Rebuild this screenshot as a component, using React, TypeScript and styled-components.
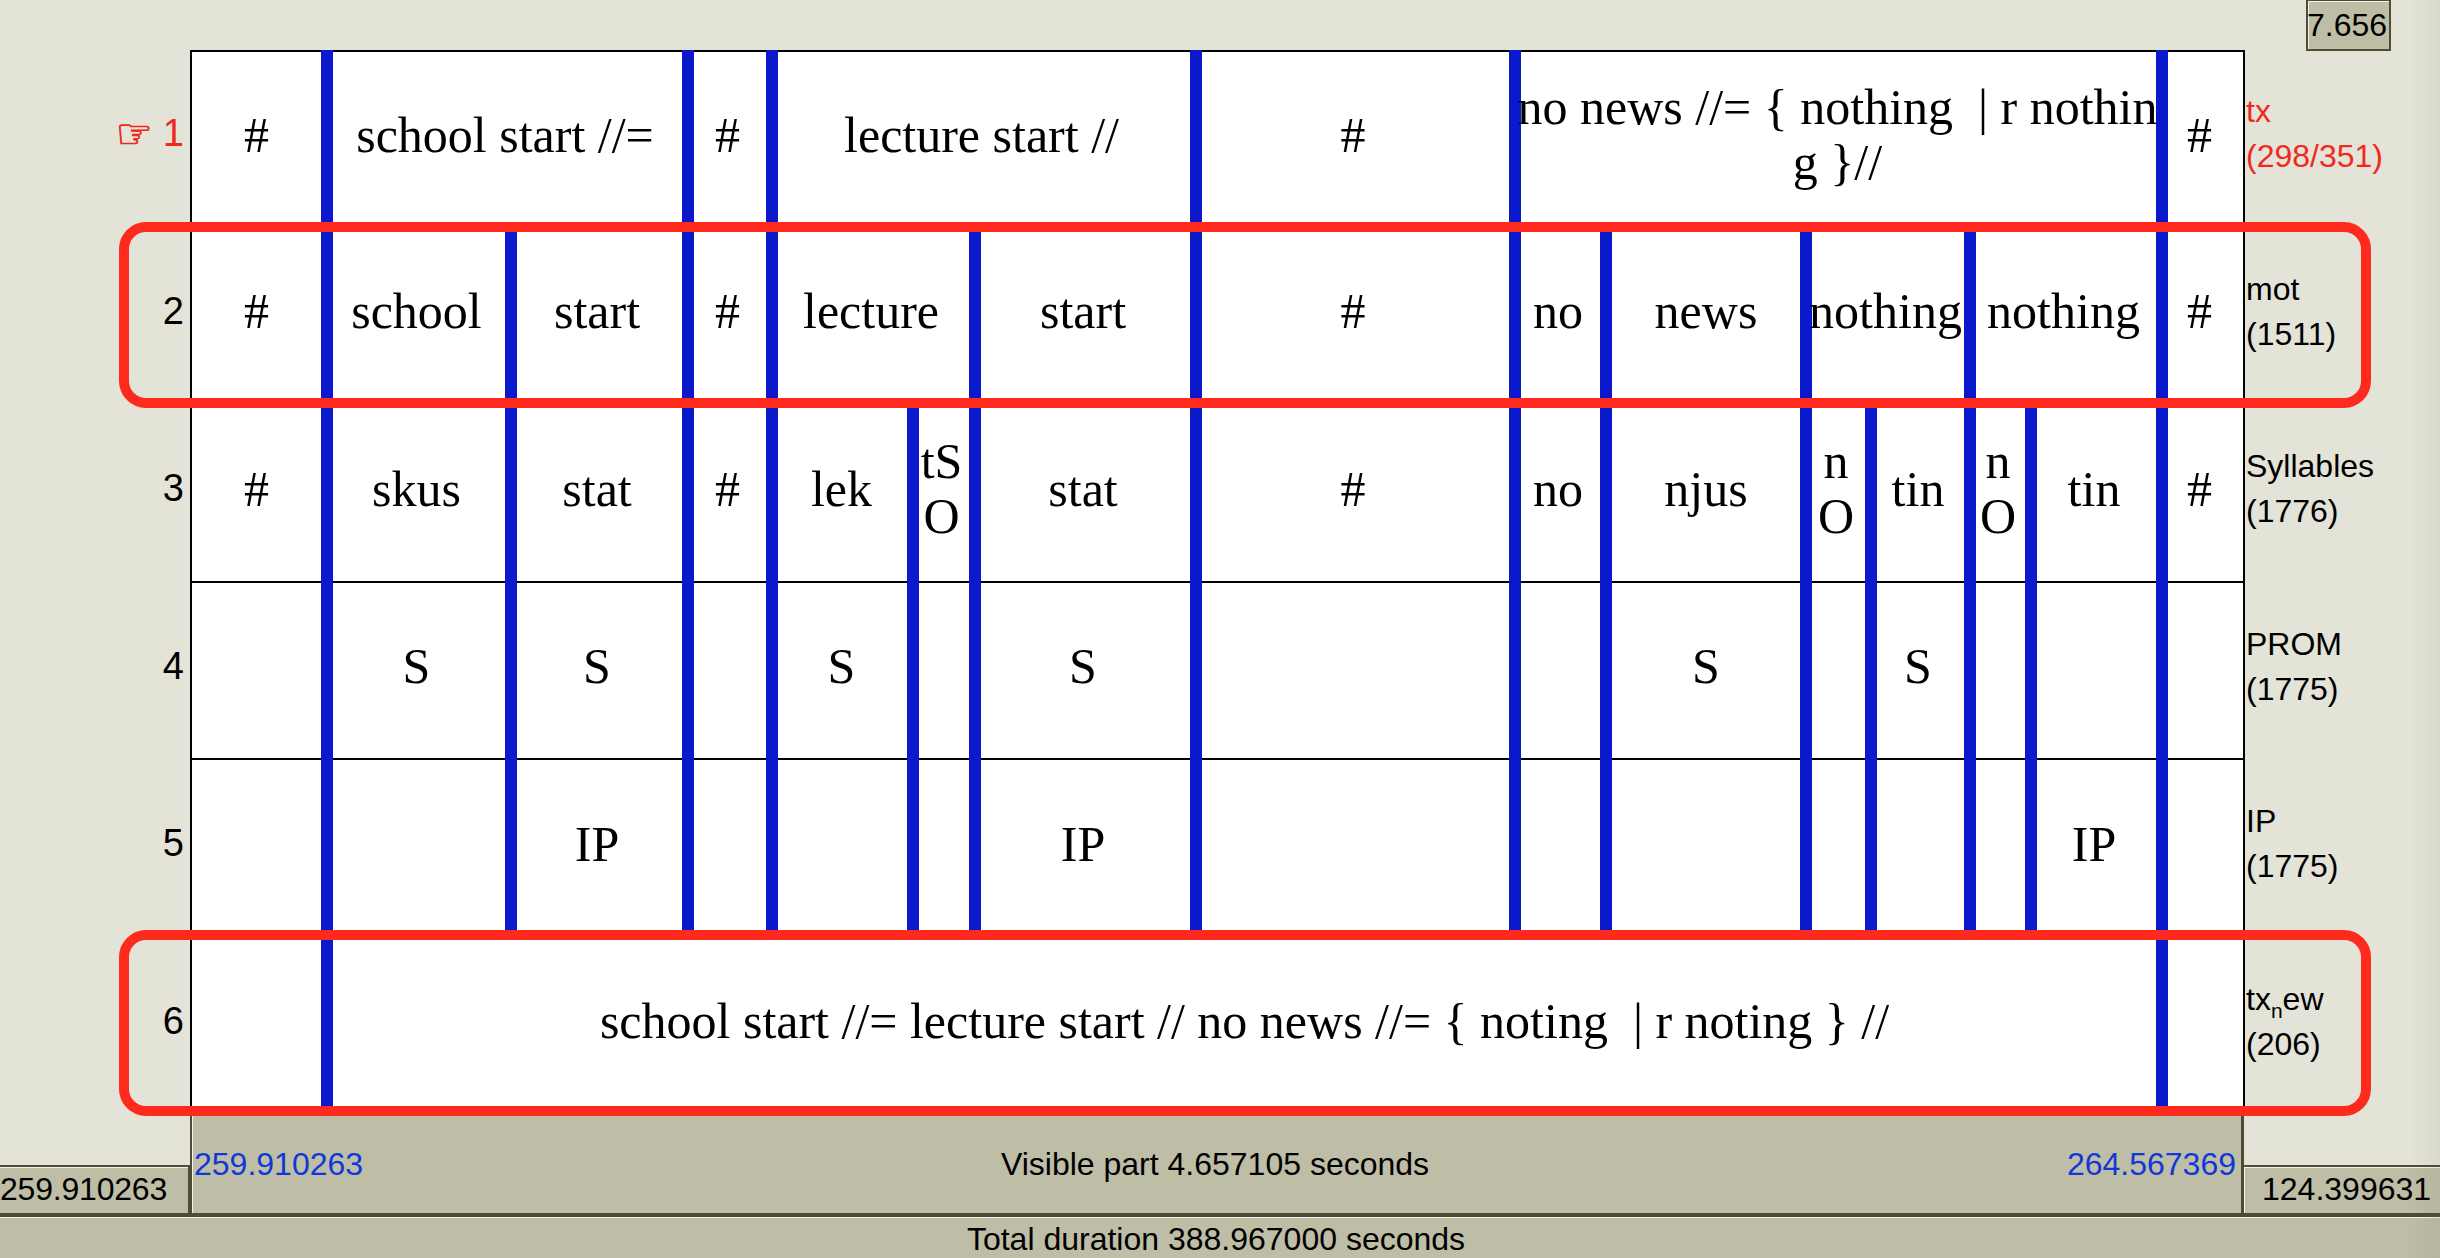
import React from "react";
import styled, { createGlobalStyle } from "styled-components";

const SANS = `"Liberation Sans", Arial, sans-serif`;
const SERIF = `"Liberation Serif", "Times New Roman", serif`;

const BG = "#e3e3d8";
const BAR = "#bebda5";
const DARK = "#4d4d35";
const LIGHT = "#f4f4e8";
const RED = "#f0291f";
const BLUE = "#0a19cc";

// left edge of the drawing area inside the panel border
const PANEL_START = 192;

const Sub = styled.span`
  font-size: 21px;
  position: relative;
  top: 8px;
  line-height: 0;
`;

type Interval = { at: number; text?: string | string[]; pad?: number };

type TierData = {
  num: number;
  name: React.ReactNode;
  count: string;
  cells: Interval[];
  active?: boolean;
  highlightTop?: number;
};

const syllableBounds = [321, 505, 682, 766, 907, 969, 1190, 1509, 1600, 1800, 1865, 1964, 2025, 2156];

const syllablePad = (at: number) => {
  if (at === 1600) return 0;
  if (at === 766) return 2;
  if (at === 2156) return 12;
  return undefined;
};

const fromLabels = (labels: Record<number, string | string[]>): Interval[] => [
  { at: PANEL_START, text: labels[PANEL_START], pad: 0 },
  ...syllableBounds.map((at) => ({ at, text: labels[at], pad: syllablePad(at) })),
];

const tiers: TierData[] = [
  {
    num: 1,
    name: "tx",
    count: "(298/351)",
    active: true,
    cells: [
      { at: PANEL_START, text: "#", pad: 0 },
      { at: 321, text: "school start //=" },
      { at: 682, text: "#" },
      { at: 766, text: "lecture start //" },
      { at: 1190, text: "#" },
      { at: 1509, text: ["no news //= { nothing \u00a0|\u00a0r nothin", "g }//"], pad: 2 },
      { at: 2156, text: "#", pad: 12 },
    ],
  },
  {
    num: 2,
    name: "mot",
    count: "(1511)",
    highlightTop: -6,
    cells: [
      { at: PANEL_START, text: "#", pad: 0 },
      { at: 321, text: "school" },
      { at: 505, text: "start" },
      { at: 682, text: "#" },
      { at: 766, text: "lecture" },
      { at: 969, text: "start" },
      { at: 1190, text: "#" },
      { at: 1509, text: "no" },
      { at: 1600, text: "news", pad: 0 },
      { at: 1800, text: "nothing" },
      { at: 1964, text: "nothing" },
      { at: 2156, text: "#", pad: 12 },
    ],
  },
  {
    num: 3,
    name: "Syllables",
    count: "(1776)",
    cells: fromLabels({
      [PANEL_START]: "#",
      321: "skus",
      505: "stat",
      682: "#",
      766: "lek",
      907: ["tS", "O"],
      969: "stat",
      1190: "#",
      1509: "no",
      1600: "njus",
      1800: ["n", "O"],
      1865: "tin",
      1964: ["n", "O"],
      2025: "tin",
      2156: "#",
    }),
  },
  {
    num: 4,
    name: "PROM",
    count: "(1775)",
    cells: fromLabels({ 321: "S", 505: "S", 766: "S", 969: "S", 1600: "S", 1865: "S" }),
  },
  {
    num: 5,
    name: "IP",
    count: "(1775)",
    cells: fromLabels({ 505: "IP", 969: "IP", 2025: "IP" }),
  },
  {
    num: 6,
    name: (
      <>
        tx<Sub>n</Sub>ew
      </>
    ),
    count: "(206)",
    highlightTop: -8,
    cells: [
      { at: PANEL_START },
      { at: 321, text: "school start //= lecture start // no news //= { noting \u00a0|\u00a0r noting } //", pad: 0 },
      { at: 2156 },
    ],
  },
];

const GlobalStyle = createGlobalStyle`
  html, body {
    margin: 0;
    padding: 0;
    background: ${BG};
  }
`;

const Page = styled.div`
  position: relative;
  width: 2440px;
  height: 1258px;
  overflow: hidden;
  background: ${BG};
  font-family: ${SANS};
  font-size: 32px;
  color: #000;
  display: flex;
  flex-direction: column;

  /* the window shadow along the right edge */
  &::after {
    content: "";
    position: absolute;
    inset: 0;
    pointer-events: none;
    background: linear-gradient(90deg, rgba(60, 60, 30, 0) 2408px, rgba(60, 60, 30, 0.06) 2440px);
  }
`;

const TopBar = styled.div`
  height: 50px;
  display: flex;
  justify-content: flex-end;
  padding-right: 49px;
`;

const ZoomBox = styled.div`
  box-sizing: border-box;
  width: 85px;
  height: 51px;
  flex-shrink: 0;
  display: flex;
  align-items: center;
  justify-content: center;
  padding-right: 3px;
  background: ${BAR};
  border: 2px solid ${DARK};
  border-top-width: 1px;
  box-shadow: inset 1px 1px 0 ${LIGHT};
`;

const Tiers = styled.div`
  height: 1065px;
  display: grid;
  grid-template-rows: repeat(6, 1fr);
`;

const Row = styled.div`
  position: relative;
  display: grid;
  grid-template-columns: 190px 2055px 195px;
  min-height: 0;
`;

const TierNumber = styled.div<{ $active?: boolean }>`
  display: flex;
  align-items: center;
  justify-content: flex-end;
  gap: 10px;
  padding: 0 6px 10px 0;
  font-size: 38px;
  color: ${(p) => (p.$active ? RED : "#000")};
`;

const Hand = styled.span`
  font-family: "DejaVu Sans", sans-serif;
  font-size: 41px;
  -webkit-text-stroke: 0.9px ${RED};
`;

const Panel = styled.div<{ $first?: boolean }>`
  box-sizing: border-box;
  display: flex;
  min-width: 0;
  border-left: 2px solid #000;
  border-right: 2px solid #000;
  background-color: #fff;
  background-image: linear-gradient(#000, #000), linear-gradient(#000, #000);
  background-repeat: no-repeat;
  background-size: 100% 2px, 100% ${(p) => (p.$first ? "2px" : "0")};
  background-position: left bottom, left top;
`;

const Cell = styled.div<{ $w?: number; $first?: boolean; $pad?: number; $lift: number }>`
  box-sizing: border-box;
  ${(p) => (p.$w !== undefined ? `flex: 0 0 ${p.$w}px;` : "flex: 1 1 0;")}
  min-width: 0;
  display: flex;
  flex-direction: column;
  align-items: center;
  justify-content: center;
  padding: 0 ${(p) => p.$pad ?? 5}px ${(p) => p.$lift}px 0;
  border-left: ${(p) => (p.$first ? "0" : `12px solid ${BLUE}`)};
  font-family: ${SERIF};
  font-size: 50px;
  line-height: 55px;
  white-space: pre;
`;

const Line = styled.span`
  display: block;
`;

const SideLabel = styled.div<{ $active?: boolean }>`
  display: flex;
  flex-direction: column;
  justify-content: center;
  padding: 0 0 9px 1px;
  line-height: 45px;
  white-space: nowrap;
  color: ${(p) => (p.$active ? RED : "#000")};
`;

const Highlight = styled.div<{ $top: number }>`
  position: absolute;
  box-sizing: border-box;
  left: 119px;
  width: 2252px;
  top: ${(p) => p.$top}px;
  height: 186px;
  border: 10px solid #ff2a1e;
  border-radius: 27px;
  z-index: 2;
  pointer-events: none;
`;

const BottomRow = styled.div`
  height: 102px;
  display: grid;
  grid-template-columns: 190px 2054px 196px;
`;

const ReadoutSlot = styled.div`
  display: flex;
  flex-direction: column;
  justify-content: flex-end;
`;

const Readout = styled.div<{ $side: "left" | "right" }>`
  box-sizing: border-box;
  height: 52px;
  display: flex;
  align-items: center;
  background: ${BAR};
  border-top: 2px solid ${DARK};
  border-bottom: 4px solid ${DARK};
  box-shadow: inset ${(p) => (p.$side === "right" ? "1px" : "0")} 1px 0 ${LIGHT};
  padding: 0 0 2px ${(p) => (p.$side === "right" ? "18px" : "0")};
  ${(p) => (p.$side === "left" ? `border-right: 2px solid ${DARK}; letter-spacing: -0.2px;` : "")}
`;

const VisibleBar = styled.div`
  box-sizing: border-box;
  display: flex;
  align-items: center;
  justify-content: space-between;
  padding: 0 5px 0 2px;
  background: ${BAR};
  border-left: 2px solid ${DARK};
  border-right: 3px solid ${DARK};
  border-bottom: 4px solid ${DARK};
  box-shadow: inset 1px 1px 0 ${LIGHT};
`;

const TimeMark = styled.span`
  color: #1038d8;
`;

const TotalBar = styled.div`
  flex: 1;
  display: flex;
  align-items: center;
  justify-content: center;
  padding: 4px 8px 0 0;
  background: ${BAR};
  box-shadow: inset 0 1px 0 ${LIGHT};
`;

const cellLines = (text?: string | string[]) =>
  (Array.isArray(text) ? text : text ? [text] : []).map((line) => <Line key={line}>{line}</Line>);

const App = () => {
  return (
    <Page>
      <GlobalStyle />
      <TopBar>
        <ZoomBox>7.656</ZoomBox>
      </TopBar>
      <Tiers>
        {tiers.map((tier) => (
          <Row key={tier.num}>
            <TierNumber $active={tier.active}>
              {tier.active && <Hand>{"\u261E\uFE0E"}</Hand>}
              {tier.num}
            </TierNumber>
            <Panel $first={tier.num === 1}>
              {tier.cells.map((cell, i) => {
                const next = tier.cells[i + 1];
                return (
                  <Cell
                    key={cell.at}
                    $first={i === 0}
                    $pad={cell.pad}
                    $lift={tier.active ? 7 : 9}
                    $w={next ? next.at - cell.at : undefined}
                  >
                    {cellLines(cell.text)}
                  </Cell>
                );
              })}
            </Panel>
            <SideLabel $active={tier.active}>
              <span>{tier.name}</span>
              <span>{tier.count}</span>
            </SideLabel>
            {tier.highlightTop !== undefined && <Highlight $top={tier.highlightTop} />}
          </Row>
        ))}
      </Tiers>
      <BottomRow>
        <ReadoutSlot>
          <Readout $side="left">259.910263</Readout>
        </ReadoutSlot>
        <VisibleBar>
          <TimeMark>259.910263</TimeMark>
          <span>Visible part 4.657105 seconds</span>
          <TimeMark>264.567369</TimeMark>
        </VisibleBar>
        <ReadoutSlot>
          <Readout $side="right">124.399631</Readout>
        </ReadoutSlot>
      </BottomRow>
      <TotalBar>Total duration 388.967000 seconds</TotalBar>
    </Page>
  );
};

export default App;
